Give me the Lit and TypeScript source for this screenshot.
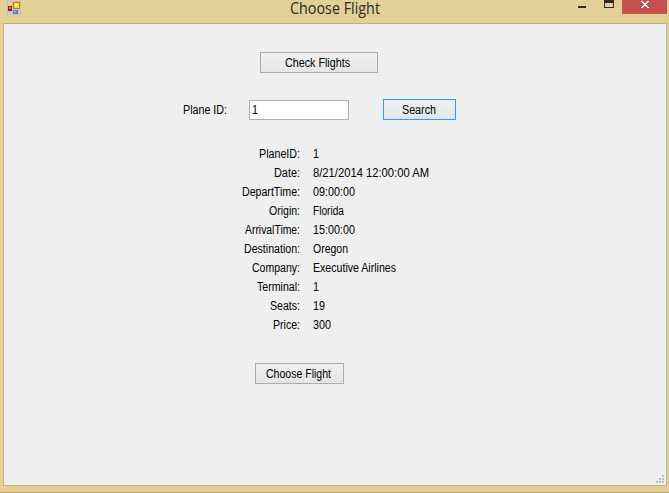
import { LitElement, html, css } from "lit";
import { customElement } from "lit/decorators.js";

// label, label width, value, value width
const rows: [string, number, string, number][] = [
  ["PlaneID:", 41, "1", 6],
  ["Date:", 26, "8/21/2014 12:00:00 AM", 116],
  ["DepartTime:", 58, "09:00:00", 42],
  ["Origin:", 31, "Florida", 31],
  ["ArrivalTime:", 55, "15:00:00", 42],
  ["Destination:", 56, "Oregon", 35],
  ["Company:", 48, "Executive Airlines", 83],
  ["Terminal:", 43, "1", 6],
  ["Seats:", 30, "19", 12],
  ["Price:", 27, "300", 18],
];

@customElement("fit-text")
class FitText extends LitElement {
  static properties = { text: {}, width: { type: Number }, size: { type: Number } };
  declare text: string;
  declare width: number;
  declare size: number;
  static styles = css`
    :host { display: inline-block; line-height: 0; }
    svg { display: block; overflow: visible; }
    text { fill: currentColor; }
  `;
  render() {
    const size = this.size || 12;
    return html`<svg width=${this.width} height="13"><text x="0" y="11" font-size=${size} textLength=${this.width} lengthAdjust="spacingAndGlyphs">${this.text}</text></svg>`;
  }
}

@customElement("app-root")
class AppRoot extends LitElement {
  static styles = css`
    :host {
      display: block; box-sizing: border-box; width: 669px; height: 493px; overflow: hidden;
      background: #e2d096; border-bottom: 1px solid #b3a26c; color: #000;
      font: 12px "Liberation Sans", Arial, sans-serif;
    }
    .title { position: relative; height: 23px; display: flex; justify-content: center; color: #2b2920; font-family: "Open Sans", "Noto Sans", sans-serif; }
    .title fit-text { margin-top: 3px; }
    .icon { position: absolute; left: 7px; top: 1px; }
    .controls { position: absolute; right: 0; top: 0; display: block; }
    .client {
      position: relative; box-sizing: border-box; margin-left: 3px; width: 664px; height: 463px;
      border: 1px solid #c0b07b; background: #efefef; display: flex; flex-direction: column;
    }
    button {
      box-sizing: border-box; height: 21px; padding: 0; border: 1px solid #acacac;
      background: linear-gradient(#f0f0f0, #e5e5e5); font: inherit; color: #000;
      display: flex; align-items: center; justify-content: center;
    }
    .check { width: 118px; margin: 28px 0 0 256px; padding-right: 3px; }
    .query { display: flex; align-items: center; margin: 26px 0 0 179px; height: 21px; }
    .field { box-sizing: border-box; width: 100px; height: 20px; margin: 1px 34px 0 22px; background: #fff; border: 1px solid #abadb3; padding: 2px 0 0 2px; }
    .search { width: 73px; border-color: #3399ff; padding-right: 2px; }
    .details { margin: 27px 0 0; display: grid; grid-template-columns: 296px auto; column-gap: 13px; grid-auto-rows: 19px; }
    .details fit-text { justify-self: start; }
    .details .label { justify-self: end; }
    .choose { width: 89px; margin: 26px 0 0 251px; padding-right: 2px; }
    .grip { position: absolute; right: 1px; bottom: 1px; }
  `;
  render() {
    return html`
      <div class="title">
        <svg class="icon" width="14" height="14" shape-rendering="crispEdges">
          <path d="M0 0h14v14H0z" fill="#c4c0b4"/>
          <path d="M1 1h4v3H1zM1 11h2v2H1zM4 11h1v2H4zM12 9h1v4h-1z" fill="#e2d3a2"/>
          <path d="M1 5h4v5H1z" fill="#a9150c"/><path d="M2 6h2v2H2z" fill="#f07a68"/>
          <path d="M6 1h7v7H6z" fill="#bd8705"/><path d="M7 2h5v5H7z" fill="#ffd34c"/><path d="M8 3h3v2H8z" fill="#ffe88a"/>
          <path d="M6 9h5v4H6z" fill="#4c84e0"/><path d="M7 10h2v1H7z" fill="#a5c9ff"/>
        </svg>
        <fit-text text="Choose Flight" width="90" size="15.5"></fit-text>
        <svg class="controls" width="110" height="14" shape-rendering="crispEdges">
          <path d="M19 6h8v2h-8zM45 0h10v8H45z" fill="#2b2920"/><path d="M46 3h8v4h-8z" fill="#e2d096"/>
          <path d="M63 0h45v14H63z" fill="#c75050"/>
          <path d="M82 1h2v1h-2zM88 1h2v1h-2zM83 2h2v1h-2zM87 2h2v1h-2zM84 3h4v1h-4zM85 4h2v1h-2zM84 5h4v1h-4zM83 6h2v1h-2zM87 6h2v1h-2zM82 7h2v1h-2zM88 7h2v1h-2z" fill="#fff"/>
        </svg>
      </div>
      <div class="client">
        <button class="check"><fit-text text="Check Flights" width="65"></fit-text></button>
        <div class="query">
          <fit-text text="Plane ID:" width="44"></fit-text>
          <div class="field"><fit-text text="1" width="6"></fit-text></div>
          <button class="search"><fit-text text="Search" width="34"></fit-text></button>
        </div>
        <div class="details">
          ${rows.map(([label, lw, value, vw]) => html`
            <fit-text class="label" .text=${label} .width=${lw}></fit-text>
            <fit-text .text=${value} .width=${vw}></fit-text>`)}
        </div>
        <button class="choose"><fit-text text="Choose Flight" width="65"></fit-text></button>
        <svg class="grip" width="9" height="9" shape-rendering="crispEdges">
          <path d="M6 0h2v2H6zM3 3h2v2H3zM6 3h2v2H6zM0 6h2v2H0zM3 6h2v2H3zM6 6h2v2H6z" fill="#bdbdbd"/>
        </svg>
      </div>`;
  }
}
